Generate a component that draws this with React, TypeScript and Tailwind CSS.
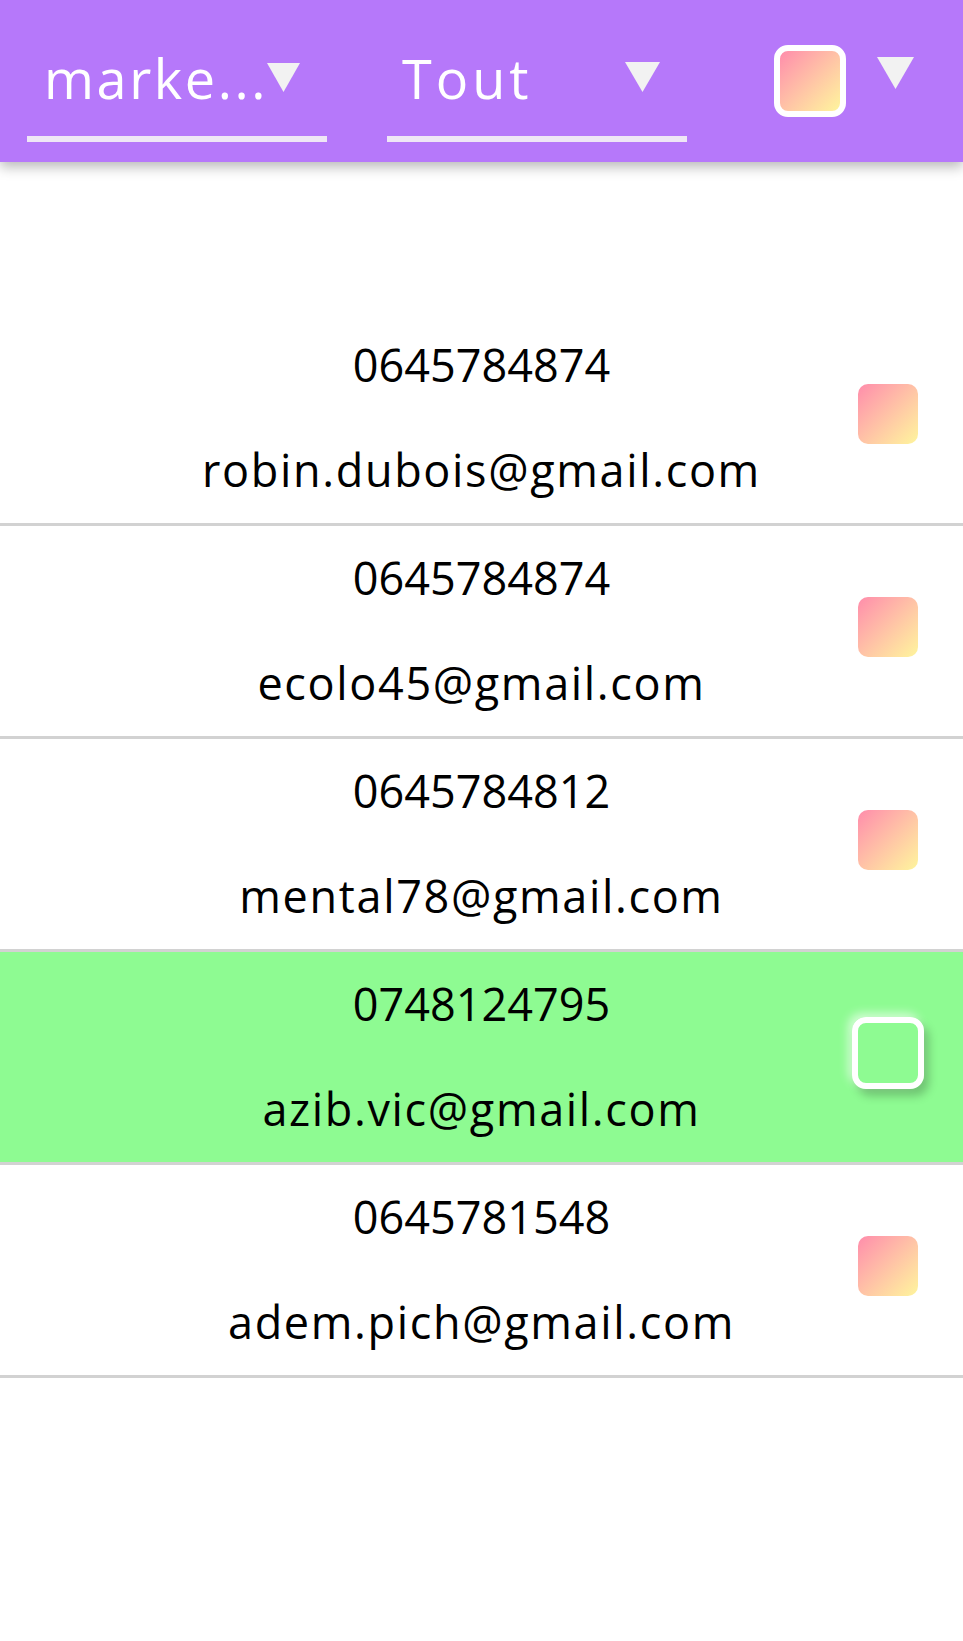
import React from "react";

type Contact = { phone: string; email: string; selected?: boolean };

const contacts: Contact[] = [
  { phone: "0645784874", email: "robin.dubois@gmail.com" },
  { phone: "0645784874", email: "ecolo45@gmail.com" },
  { phone: "0645784812", email: "mental78@gmail.com" },
  { phone: "0748124795", email: "azib.vic@gmail.com", selected: true },
  { phone: "0645781548", email: "adem.pich@gmail.com" },
];

function Triangle({ w, h }: { w: number; h: number }) {
  return (
    <svg width={w} height={h} viewBox={`0 0 ${w} ${h}`} className="shrink-0">
      <polygon points={`0,0 ${w},0 ${w / 2},${h}`} fill="#f2f2f2" />
    </svg>
  );
}

export default function App() {
  return (
    <div className="w-full min-h-[1641px] bg-white font-['Open_Sans',sans-serif]">
      {/* Barre de filtres */}
      <header className="relative z-10 h-[162px] bg-[#b678fa] shadow-[0_5px_12px_rgba(0,0,0,0.28)] flex items-start pl-[27px] pt-[46px]">
        <div className="w-[300px] flex items-start border-b-[6px] border-[#efe6f6] pb-[26px]">
          <span className="w-[240px] pl-[17px] text-[54px] leading-[64px] tracking-[2.6px] text-white whitespace-nowrap">marke...</span>
          <div className="mt-[17px]">
            <Triangle w={33} h={29} />
          </div>
        </div>
        <div className="ml-[60px] w-[300px] flex items-start border-b-[6px] border-[#efe6f6] pb-[26px]">
          <span className="w-[238px] pl-[15px] text-[54px] leading-[64px] tracking-[4px] text-white">Tout</span>
          <div className="mt-[16px]">
            <Triangle w={35} h={30} />
          </div>
        </div>
        <div className="ml-[87px] -mt-[1px] w-[72px] h-[72px] rounded-[14px] border-[6px] border-white bg-gradient-to-br from-[#ff8cab] to-[#fdf59c]"></div>
        <div className="ml-[31px] mt-[11px]">
          <Triangle w={37} h={32} />
        </div>
      </header>

      {/* Liste des contacts */}
      <main className="pt-[151px]">
        {contacts.map((c, i) => (
          <div
            key={i}
            className={
              c.selected
                ? "grid grid-cols-[105px_1fr_105px] h-[213px] border-b-[3px] border-[#d2d2d2] bg-[#8efb92]"
                : "grid grid-cols-[105px_1fr_105px] h-[213px] border-b-[3px] border-[#d2d2d2] bg-white"
            }
          >
            <div></div>
            <div className="flex flex-col items-center text-[45px] leading-[105px] text-black -mt-[1px]">
              <span>{c.phone}</span>
              <span className="tracking-[1.65px]">{c.email}</span>
            </div>
            <div className="mt-[71px] w-[60px] h-[60px] flex items-center justify-center">
              {c.selected ? (
                <div className="w-[72px] h-[72px] shrink-0 rounded-[14px] border-[6px] border-white shadow-[5px_7px_10px_rgba(0,0,0,0.22),-4px_-4px_10px_rgba(255,255,255,0.6)]"></div>
              ) : (
                <div className="w-[60px] h-[60px] shrink-0 rounded-[10px] bg-gradient-to-br from-[#ff8cab] to-[#fdf59c]"></div>
              )}
            </div>
          </div>
        ))}
      </main>
    </div>
  );
}
